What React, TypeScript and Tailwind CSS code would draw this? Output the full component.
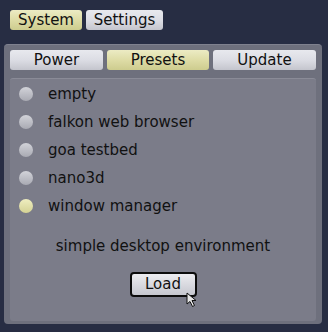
import React from 'react';

const font = { fontFamily: '"DejaVu Sans", Verdana, sans-serif' };

const presets = ['empty', 'falkon web browser', 'goa testbed', 'nano3d', 'window manager'];

const Btn: React.FC<{ label: string; active?: boolean; className?: string }> = ({ label, active, className }) => (
  <div
    className={
      'h-[20px] rounded-[3px] flex items-center justify-center text-[15px] leading-none text-[#111] ' +
      (active
        ? 'bg-gradient-to-b from-[#ecebc4] via-[#dedca6] to-[#cdcc8e] '
        : 'bg-gradient-to-b from-[#e8e9ee] via-[#dcdde4] to-[#c4c5cd] ') +
      (className || '')
    }
  >
    {label}
  </div>
);

const Radio: React.FC<{ on?: boolean }> = ({ on }) => (
  <div
    className={
      'w-[14px] h-[14px] rounded-full ' +
      (on
        ? 'bg-gradient-to-b from-[#efeec0] to-[#d4d294]'
        : 'bg-gradient-to-b from-[#d2d3d9] to-[#a9aab3]')
    }
  />
);

export default function App() {
  return (
    <div className="w-[328px] h-[332px] bg-[#272d43] relative overflow-hidden" style={font}>
      <div className="flex gap-[4px] pl-[10px] pt-[10px]">
        <Btn label="System" active className="w-[72px]" />
        <Btn label="Settings" className="w-[77px]" />
      </div>

      <div className="ml-[4px] mt-[14px] w-[318px] h-[280px] rounded-[4px] bg-[#6e707d] border-t border-[#7f818e] px-[6px] pt-[5px] flex flex-col">
        <div className="flex gap-[4px]">
          <Btn label="Power" className="w-[93px]" />
          <Btn label="Presets" active className="w-[102px]" />
          <Btn label="Update" className="w-[103px]" />
        </div>

        <div className="mt-[8px] w-[306px] h-[243px] rounded-[3px] bg-[#7b7c89] border-t border-[#8a8b97] flex flex-col">
          <div className="pt-[1px]">
            {presets.map((p, i) => (
              <div key={p} className="h-[28px] flex items-center pl-[9px]">
                <Radio on={i === presets.length - 1} />
                <span className="ml-[15px] text-[15px] text-[#111]">{p}</span>
              </div>
            ))}
          </div>
          <div className="mt-[15px] text-center text-[15px] text-[#111]">simple desktop environment</div>
          <div className="mt-[14px] flex justify-center relative">
            <div className="w-[67px] h-[25px] rounded-[4px] border-[2px] border-[#0c0c0c] bg-gradient-to-b from-[#ececf0] to-[#c6c7cf] flex items-center justify-center text-[15px] text-[#111]">
              Load
            </div>
            <svg className="absolute left-[176px] top-[20px]" width="14" height="16" viewBox="0 0 14 16">
              <path d="M1 1 L1 12 L4 9.5 L6.5 14.5 L8.5 13.5 L6 8.5 L10 8.5 Z" fill="#e6e6e6" stroke="#111" strokeWidth="1" strokeLinejoin="round" />
            </svg>
          </div>
        </div>
      </div>
    </div>
  );
}
